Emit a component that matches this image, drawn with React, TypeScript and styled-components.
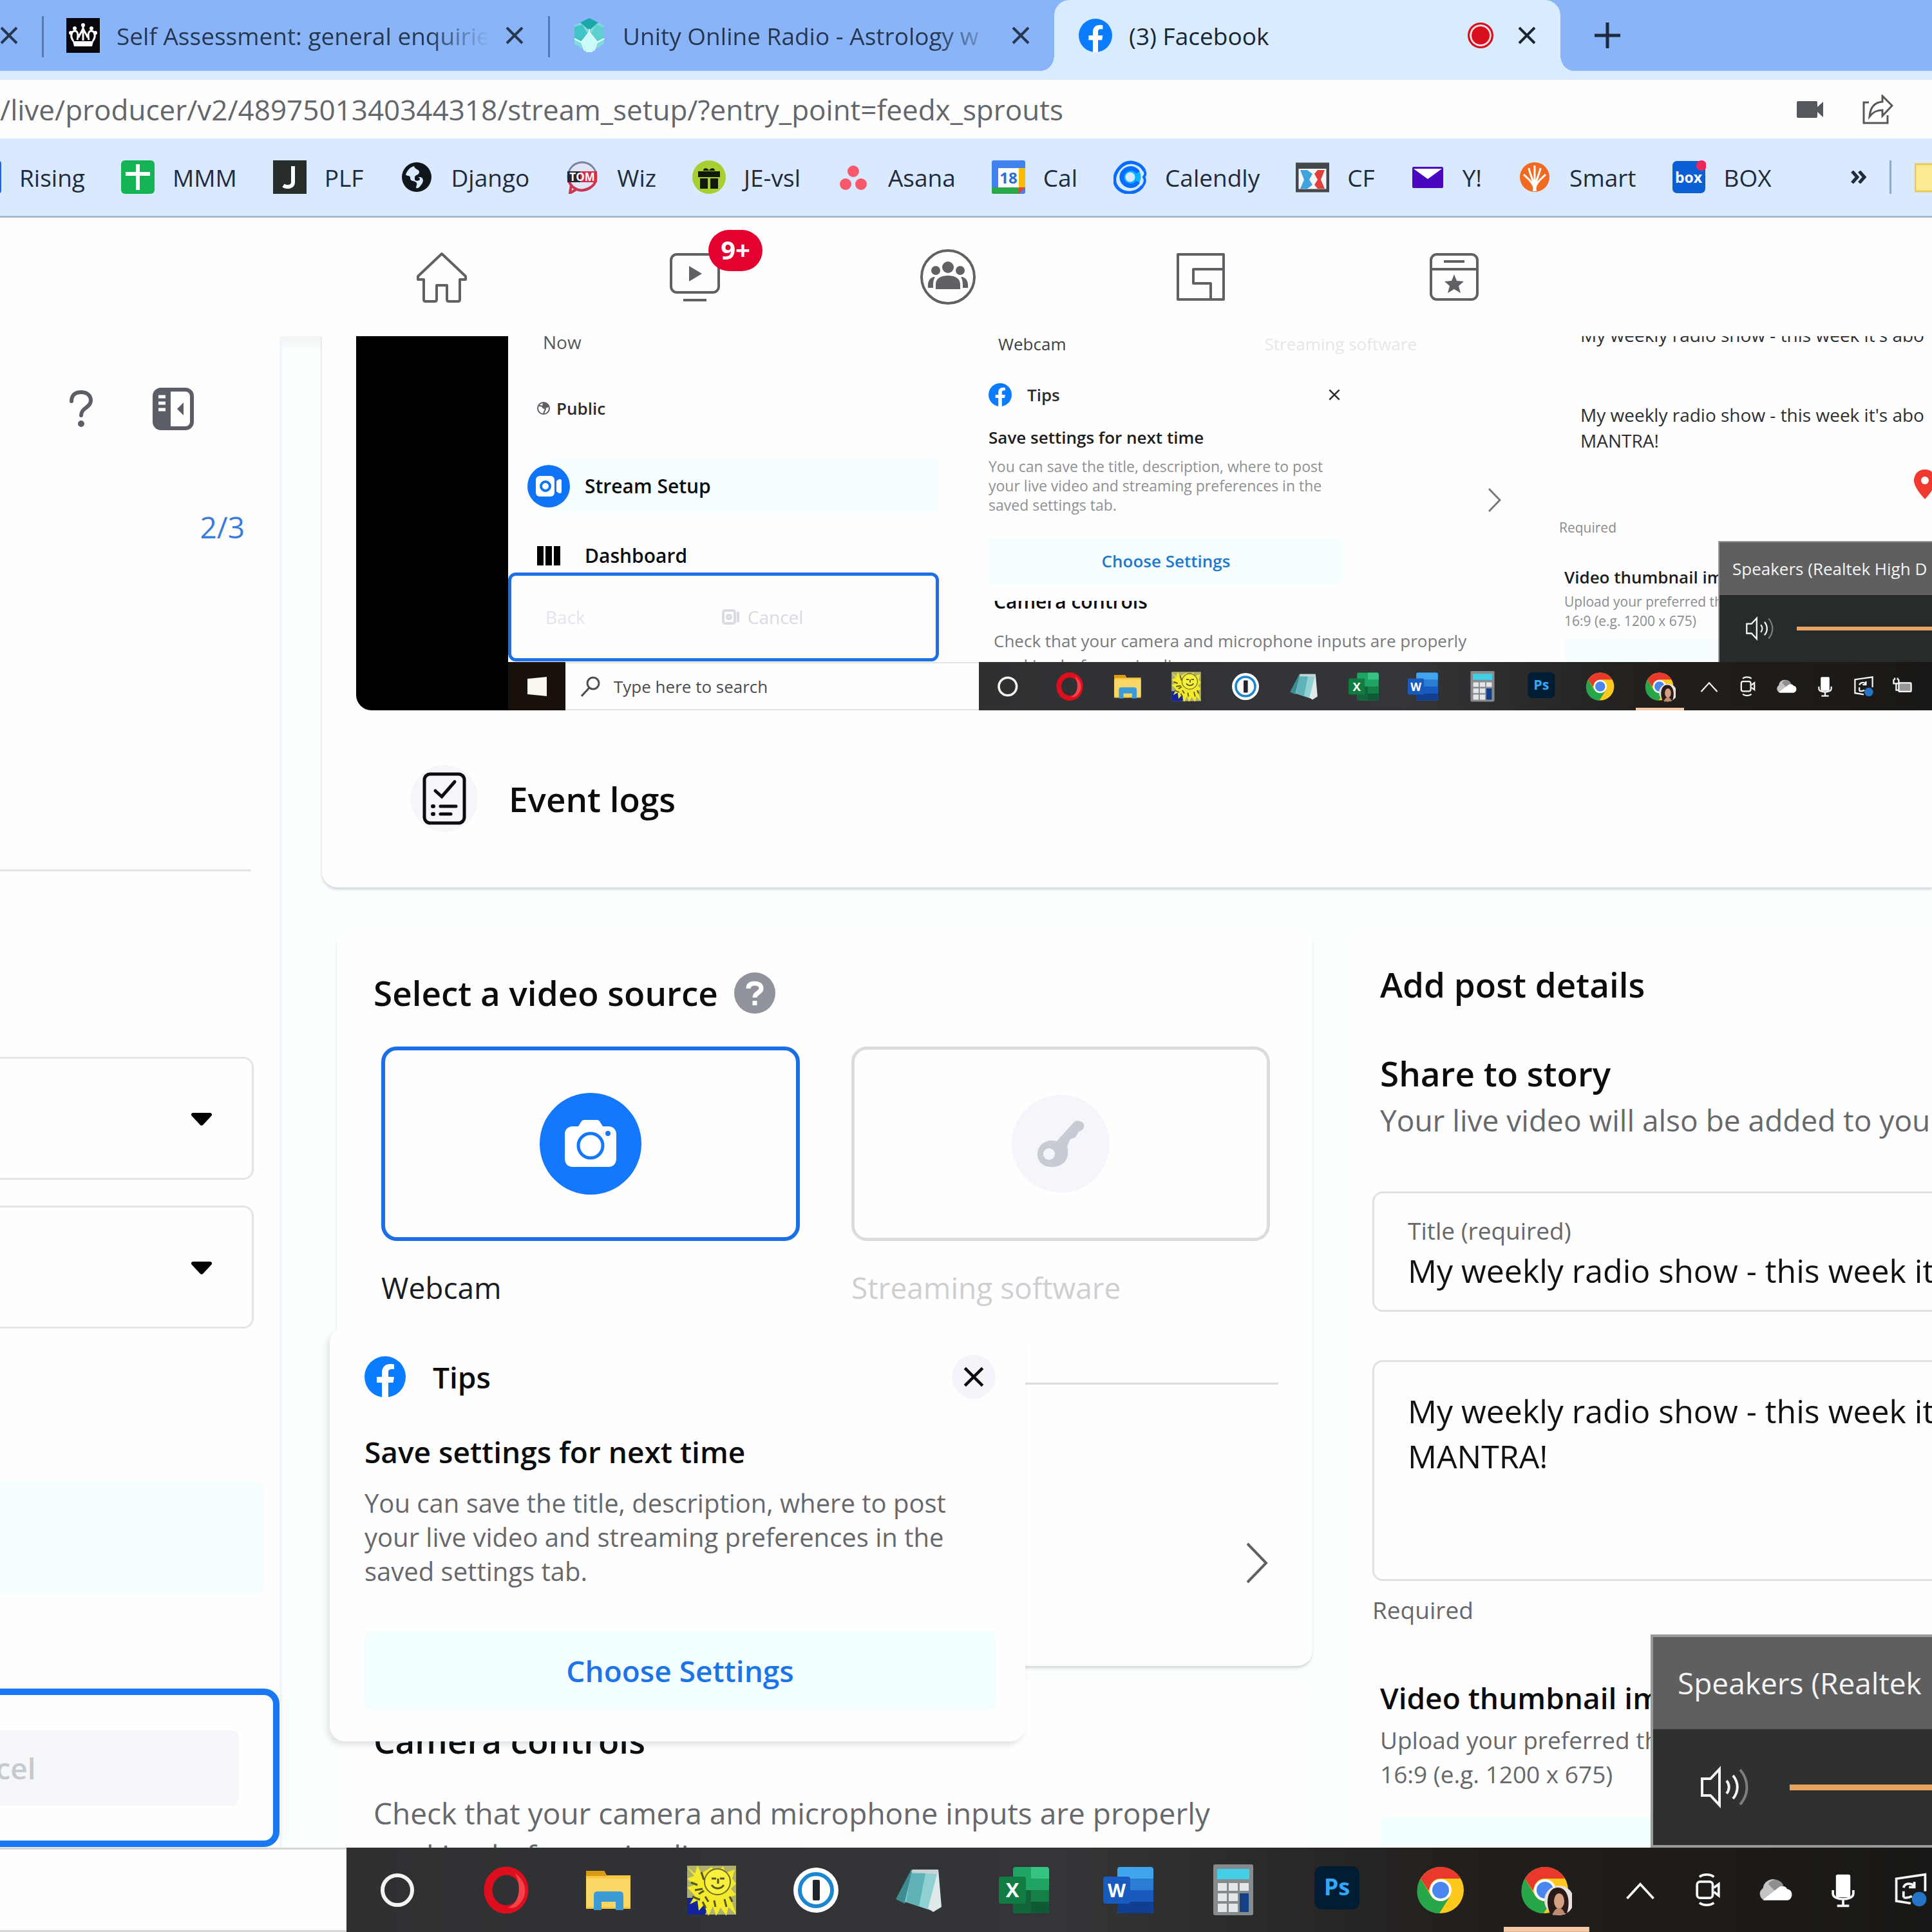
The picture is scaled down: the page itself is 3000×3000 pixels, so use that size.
import React from 'react';
import styled, { createGlobalStyle, css } from 'styled-components';

const GlobalStyle = createGlobalStyle`
  *, *::before, *::after { box-sizing: border-box; }
  html, body, #root { height: 100%; margin: 0; }
  body {
    overflow: hidden;
    background: #fefefe;
    color: #0b0c0e;
    font-family: "Open Sans", "Noto Sans", sans-serif;
  }
  button, input, select, textarea { font: inherit; color: inherit; }
  h1, h2, h3, p { margin: 0; font-weight: inherit; }
  svg { flex: none; }
`;

const blue = '#1877f2';
const grey = '#66686b';

/* ---------- shared pieces ---------- */

const IconButton = styled.button`
  display: flex;
  align-items: center;
  justify-content: center;
  flex: none;
  padding: 0;
  border: 0;
  background: none;
`;

const Screen = styled.div`
  display: flex;
  flex-direction: column;
  height: 100vh;
  overflow: hidden;
`;

type GlyphProps = { size?: number };

const CrossGlyph = ({ size = 28, stroke = 4 }: { size?: number; stroke?: number }) => (
  <svg width={size} height={size} viewBox="0 0 28 28" fill="none" stroke="currentColor" strokeWidth={stroke}>
    <path d="M2 2 26 26M26 2 2 26" />
  </svg>
);

const FacebookGlyph = ({ size = 52 }: GlyphProps) => (
  <svg width={size} height={size} viewBox="0 0 64 64">
    <circle cx="32" cy="32" r="32" fill="#0a7cff" />
    <path
      fill="#fff"
      d="M27 64V41h-8v-9h8v-6c0-9 5-14 13-14 3 0 6 .5 6 .5V20h-4c-4 0-5 2.500-5 5v7h9l-1.500 9H37v23z"
    />
  </svg>
);

/* ---------- browser tabs ---------- */

const TabStrip = styled.div`
  display: flex;
  flex: none;
  height: 110px;
  background: #8ab4f8;
  color: #27374f;
`;

const Tab = styled.div<{ $active?: boolean }>`
  position: relative;
  display: flex;
  align-items: center;
  flex: none;
  width: 786px;
  padding: 0 38px;
  gap: 26px;
  font-size: 37px;
  ${(p) =>
    p.$active
      ? css`
          background: #d9ecff;
          color: #1c2530;
          border-radius: 24px 24px 0 0;
          &::before,
          &::after {
            content: '';
            position: absolute;
            bottom: 0;
            width: 20px;
            height: 24px;
          }
          &::before {
            left: -20px;
            background: radial-gradient(ellipse 20px 24px at 0 0, transparent 98%, #d9ecff 100%);
          }
          &::after {
            right: -20px;
            background: radial-gradient(ellipse 20px 24px at 100% 0, transparent 98%, #d9ecff 100%);
          }
        `
      : css`
          &::before {
            content: '';
            position: absolute;
            left: 0;
            top: 25px;
            height: 64px;
            width: 3px;
            background: #5a78aa;
          }
        `}
`;

const TabStub = styled.div`
  display: flex;
  align-items: center;
  flex: none;
  width: 65px;
`;

const TabTitle = styled.span<{ $fade?: boolean }>`
  flex: 1;
  min-width: 0;
  overflow: hidden;
  white-space: nowrap;
  ${(p) => p.$fade && 'mask-image: linear-gradient(to right, #000 84%, transparent 100%);'}
`;

const RecordDot = styled.span`
  flex: none;
  width: 40px;
  height: 40px;
  margin-right: 12px;
  border: 3px solid #d8101c;
  border-radius: 50%;
  background: #d8101c;
  box-shadow: inset 0 0 0 3px #f6dfe8;
`;

const NewTab = styled(IconButton)`
  width: 146px;
  color: #1d2b40;
`;

/* ---------- address bar ---------- */

const AddressBar = styled.form`
  display: flex;
  flex: none;
  align-items: center;
  gap: 60px;
  height: 105px;
  border-top: 14px solid #d9ecff;
  background: #fefefe;
  color: #54575b;
`;

const UrlInput = styled.input`
  flex: 1;
  min-width: 0;
  padding: 0;
  border: 0;
  outline: 0;
  background: none;
  color: #63666a;
  font-size: 44px;
`;

const StarButton = styled(IconButton)`
  margin-right: -48px;
`;

/* ---------- bookmarks ---------- */

const Bookmarks = styled.nav`
  display: flex;
  flex: none;
  align-items: center;
  gap: 56px;
  height: 123px;
  border-bottom: 3px solid #a5b8d2;
  background: #d9eafe;
  color: #222a3c;
  font-size: 37px;
`;

const Bookmark = styled.a<{ $cut?: boolean }>`
  display: flex;
  align-items: center;
  flex: none;
  gap: 28px;
  margin-left: ${(p) => (p.$cut ? '-50px' : 0)};
  color: inherit;
  text-decoration: none;
  white-space: nowrap;
`;

const BookmarkTail = styled.div`
  display: flex;
  align-items: center;
  gap: 36px;
  margin: 0 -25px 0 auto;
`;

const TailRule = styled.span`
  width: 3px;
  height: 52px;
  background: #8fa9d4;
`;

const SvgText = styled.text`
  font-family: "Open Sans", sans-serif;
  font-weight: 700;
  text-anchor: middle;
`;

const Fav = ({ children }: { children: React.ReactNode }) => (
  <svg width="52" height="52" viewBox="0 0 52 52">
    {children}
  </svg>
);

const bookmarks: { name: string; icon: React.ReactNode }[] = [
  { name: 'Rising', icon: <rect width="52" height="52" rx="5" fill="#1a66f0" /> },
  {
    name: 'MMM',
    icon: (
      <>
        <rect width="52" height="52" rx="6" fill="#14b353" />
        <path d="M23 6h6v12h16v6H29v22h-6V24H7v-6h16z" fill="#fff" />
      </>
    ),
  },
  {
    name: 'PLF',
    icon: (
      <>
        <rect width="52" height="52" fill="#272d2a" />
        <path d="M31 9v25c0 7-9 9-15 5" fill="none" stroke="#fff" strokeWidth="6" />
      </>
    ),
  },
  {
    name: 'Django',
    icon: (
      <>
        <circle cx="27" cy="26" r="23" fill="#11161c" />
        <path d="M10 23c1-6 7-13 13-14 1 5 8 5 8 9 0 5-6 4-7 8l9 0c5 1 5 8 1 12-2 2-3 6-8 5 0-4 3-6 0-9-4-3-9-1-9-7 0-3-3-3-7-4z" fill="#d9eafe" />
        <path d="M24 26c3-1 8 0 8 3s-6 4-8 1z" fill="#11161c" />
      </>
    ),
  },
  {
    name: 'Wiz',
    icon: (
      <>
        <circle cx="26" cy="25" r="22" fill="#dfe6f6" stroke="#7b83a3" strokeWidth="3" />
        <path d="M5 32c4 10 14 16 24 14s16-8 18-14M9 38l-2 13 10-6" fill="none" stroke="#cf3450" strokeWidth="4" />
        <rect x="3" y="17" width="20" height="17" fill="#222736" />
        <rect x="23" y="17" width="26" height="17" fill="#d92a46" />
        <SvgText x="26" y="32" fontSize="17" fill="#fff">TOM</SvgText>
      </>
    ),
  },
  {
    name: 'JE-vsl',
    icon: (
      <>
        <circle cx="26" cy="26" r="26" fill="#a6cf2f" />
        <path d="M9 17h34v9H9zM12 28h12v16H12zM28 28h12v16H28zM17 16c0-5 7-5 9 0 2-5 9-5 9 0z" fill="#12180a" />
      </>
    ),
  },
  {
    name: 'Asana',
    icon: (
      <g fill="#f9576b">
        <circle cx="26" cy="17" r="9" />
        <circle cx="14" cy="37" r="9" />
        <circle cx="38" cy="37" r="9" />
      </g>
    ),
  },
  {
    name: 'Cal',
    icon: (
      <>
        <rect width="52" height="52" rx="3" fill="#3f82f0" />
        <path d="M42 12h10v30H42z" fill="#fbbc05" />
        <path d="M0 42h42v10H3c-2 0-3-1-3-3z" fill="#2ba84a" />
        <path d="M42 42h10L42 52z" fill="#e5432f" />
        <rect x="10" y="12" width="32" height="30" fill="#fff" />
        <SvgText x="26" y="36" fontSize="24" fill="#2b6fd6">18</SvgText>
      </>
    ),
  },
  {
    name: 'Calendly',
    icon: (
      <g fill="none">
        <path d="M48 16c-7-13-25-18-37-6s-12 27-2 35 27 7 36-5" stroke="#0a6cff" strokeWidth="5" />
        <path d="M48 16c2 4 2 6-1 10 3 4 3 8-2 14" stroke="#0a6cff" strokeWidth="4" />
        <circle cx="26" cy="26" r="12" stroke="#0ab4ff" strokeWidth="9" />
        <path d="M38 33c-7 12-25 6-25-7s18-19 25-7" stroke="#0a6cff" strokeWidth="7" />
      </g>
    ),
  },
  {
    name: 'CF',
    icon: (
      <>
        <rect x="2" y="6" width="48" height="41" fill="#f3f7fb" stroke="#44484d" strokeWidth="5" />
        <path d="M2 6h48v7H2z" fill="#44484d" />
        <path d="M7 15h11l8 6-5 9 5 8-8 6H7l6-14z" fill="#3fa3dc" />
        <path d="M45 15H34l-5 6 5 9-5 8 5 6h11l-6-14z" fill="#e2403c" />
      </>
    ),
  },
  {
    name: 'Y!',
    icon: (
      <>
        <rect x="2" y="10" width="48" height="33" rx="2" fill="#4b07c0" />
        <path d="M4 13h44L26 29z" fill="#fff" />
      </>
    ),
  },
  {
    name: 'Smart',
    icon: (
      <>
        <circle cx="26" cy="26" r="23" fill="#f26a21" />
        <g stroke="#fff" strokeWidth="3" fill="none">
          <path d="M26 46V8M25 40C24 30 18 20 17 12M27 40c1-10 7-20 8-28M25 42C22 32 14 27 9 22M27 42c3-10 11-15 16-20" />
        </g>
        <path d="M23 48 25 28h2l2 20z" fill="#fff" />
      </>
    ),
  },
  {
    name: 'BOX',
    icon: (
      <>
        <rect y="1" width="51" height="50" rx="7" fill="#0a5fd4" />
        <SvgText x="25" y="35" fontSize="23" fill="#fff">box</SvgText>
        <circle cx="45" cy="8" r="8" fill="#f0255c" />
      </>
    ),
  },
];

/* ---------- site header ---------- */

const SiteNav = styled.nav`
  display: flex;
  flex: none;
  height: 184px;
  padding-left: 489px;
  background: #fefefe;
  color: #5f6164;
`;

const NavItem = styled.a`
  position: relative;
  display: flex;
  align-items: center;
  justify-content: center;
  flex: none;
  width: 393px;
  color: inherit;
`;

const Badge = styled.span`
  position: absolute;
  top: 19px;
  left: 218px;
  width: 84px;
  height: 64px;
  border-radius: 32px;
  background: #e4002f;
  color: #fff;
  font-size: 40px;
  font-weight: 700;
  line-height: 62px;
  text-align: center;
`;

const navIcons: React.ReactNode[] = [
  <path key="home" d="M46 10 9 45v5h9v31c0 2 1 3 3 3h14c2 0 3-1 3-3V59h16v22c0 2 1 3 3 3h14c2 0 3-1 3-3V50h9v-5z" />,
  <g key="watch">
    <rect x="9" y="11" width="74" height="59" rx="9" />
    <path d="M28 82h36" />
    <path d="M37 29v24l20-12z" fill="currentColor" stroke="none" />
  </g>,
  <g key="groups">
    <circle cx="46" cy="46" r="41" />
    <g fill="currentColor" stroke="none">
      <circle cx="46" cy="31" r="9" />
      <circle cx="27" cy="36" r="7" />
      <circle cx="65" cy="36" r="7" />
      <path d="M27 65V58c0-10 8-14 19-14s19 4 19 14v7zM23 63H15c-1-9 2-17 11-17-3 5-3 9-3 17zM69 63h8c1-9-2-17-11-17 3 5 3 9 3 17z" />
    </g>
  </g>,
  <g key="gaming">
    <path d="M10 11h71v70H10z" />
    <path d="M81 34H34v22h27v25" />
  </g>,
  <g key="feeds">
    <rect x="10" y="11" width="72" height="70" rx="9" />
    <path d="M10 34h72M30 22h32" />
    <path d="m46 42 4 10 11 1-8 7 3 11-10-6-10 6 3-11-8-7 11-1z" fill="currentColor" stroke="none" />
  </g>,
];

/* ---------- page body ---------- */

const Body = styled.div`
  position: relative;
  display: flex;
  flex: 1;
  min-height: 0;
`;

const Sidebar = styled.aside`
  display: flex;
  flex-direction: column;
  flex: none;
  width: 434px;
  overflow: hidden;
  background: #fefefe;
`;

const SidebarTools = styled.div`
  display: flex;
  justify-content: flex-end;
  gap: 92px;
  padding: 80px 133px 0 0;
  color: #5b5e66;
`;

const StepCount = styled.p`
  margin-top: 120px;
  padding-right: 54px;
  color: #3a7bdc;
  font-size: 46px;
  line-height: 60px;
  text-align: right;
`;

const SidebarRule = styled.hr`
  width: 390px;
  height: 3px;
  margin: 502px 0 288px;
  border: 0;
  background: #e3e5e8;
`;

const SelectBox = styled.label`
  position: relative;
  display: block;
  flex: none;
  width: 414px;
  height: 191px;
  margin: 0 0 40px -20px;
  border: 3px solid #e2e4e6;
  border-radius: 16px;
  svg {
    position: absolute;
    right: 62px;
    top: 84px;
    pointer-events: none;
  }
`;

const Select = styled.select`
  width: 100%;
  height: 100%;
  border: 0;
  outline: 0;
  appearance: none;
  background: none;
`;

const ActiveStep = styled.div`
  flex: none;
  width: 410px;
  height: 172px;
  margin: 199px 0 148px;
  border-radius: 0 16px 16px 0;
  background: #f4feff;
`;

const SidebarFooter = styled.div`
  display: flex;
  flex: none;
  align-items: center;
  justify-content: flex-end;
  height: 246px;
  margin-left: -480px;
  padding-right: 53px;
  border: 10px solid ${blue};
  border-radius: 24px;
`;

const CancelButton = styled.button`
  width: 778px;
  height: 117px;
  border: 0;
  border-radius: 12px;
  background: #f5f7fa;
  color: #c6c9cd;
  font-size: 46px;
  font-weight: 600;
`;

const Main = styled.main`
  flex: 1;
  min-width: 0;
  overflow: hidden;
  padding-left: 62px;
  border-left: 4px solid #f2f5f8;
  background: linear-gradient(#f1f3f4, #fbfefe 24px);
`;

const PreviewCard = styled.section`
  border-radius: 0 0 0 24px;
  background: #fefefe;
  box-shadow: 0 3px 4px #cfd3d6;
`;

const EventLogs = styled.button`
  display: flex;
  align-items: center;
  gap: 48px;
  padding: 85px 0 86px 138px;
  border: 0;
  background: none;
  font-size: 53px;
  font-weight: 600;
`;

const RoundIcon = styled.span<{ $size: number; $tone: string }>`
  display: flex;
  align-items: center;
  justify-content: center;
  flex: none;
  width: ${(p) => p.$size}px;
  height: ${(p) => p.$size}px;
  border-radius: 50%;
  background: ${(p) => p.$tone};
`;

const Columns = styled.div`
  display: flex;
  align-items: flex-start;
  gap: 52px;
  margin: 64px -24px 0 23px;
`;

const LeftColumn = styled.div`
  position: relative;
  flex: none;
  width: 1515px;
`;

const Card = styled.section`
  border-radius: 24px;
  background: #fefefe;
`;

const SourceCard = styled(Card)`
  display: flex;
  flex-direction: column;
  height: 1145px;
  padding: 64px 53px 0 57px;
  box-shadow: 0 4px 4px -1px #cfd3d6;
`;

const Heading = styled.h2`
  display: flex;
  align-items: center;
  gap: 25px;
  font-size: 53px;
  font-weight: 600;
  line-height: 72px;
`;

const SourceOptions = styled.div`
  display: flex;
  gap: 80px;
  margin: 47px 0 0 12px;
`;

const SourceOption = styled.label<{ $muted?: boolean }>`
  display: block;
  width: 650px;
  color: ${(p) => (p.$muted ? '#cdcfd2' : '#1b1c1f')};
  font-size: 46px;
  line-height: 60px;
  input {
    position: absolute;
    opacity: 0;
  }
`;

const SourceTile = styled.span<{ $muted?: boolean }>`
  display: flex;
  align-items: center;
  justify-content: center;
  height: 302px;
  margin-bottom: 42px;
  border: ${(p) => (p.$muted ? '5px solid #dadcde' : '6px solid #1a6fe6')};
  border-radius: 24px;
`;

const CardRule = styled.hr`
  width: 100%;
  height: 3px;
  margin: 118px 0 0;
  border: 0;
  background: #d9dbde;
`;

const DeviceRow = styled.div`
  display: flex;
  flex: 1;
  align-items: center;
  justify-content: flex-end;
  padding: 116px 16px 0 0;
`;

const CameraCard = styled(Card)`
  margin-top: 23px;
  padding: 57px 53px 0 57px;
`;

const CameraText = styled.p`
  margin-top: 43px;
  color: ${grey};
  font-size: 46px;
  line-height: 66px;
  white-space: nowrap;
`;

/* ---------- tips popup ---------- */

const TipsPopup = styled.section`
  position: absolute;
  top: 620px;
  left: -11px;
  width: 1080px;
  padding: 42px 46px 49px 54px;
  border-radius: 24px;
  background: #fefefe;
  box-shadow: -4px 6px 8px rgba(60, 70, 80, 0.14);
`;

const TipsHead = styled.div`
  display: flex;
  align-items: center;
  gap: 42px;
  height: 68px;
  font-size: 46px;
  font-weight: 600;
`;

const TipsClose = styled(IconButton)`
  width: 68px;
  height: 68px;
  margin-left: auto;
  border-radius: 50%;
  background: #f3f5fa;
`;

const TipsTitle = styled.h3`
  margin-top: 52px;
  font-size: 46px;
  font-weight: 600;
  line-height: 60px;
`;

const TipsText = styled.p`
  margin: 23px 0 66px;
  color: ${grey};
  font-size: 40px;
  line-height: 53px;
  white-space: nowrap;
`;

const TipsAction = styled.button`
  display: block;
  width: 100%;
  height: 123px;
  border: 0;
  border-radius: 12px;
  background: #f3feff;
  color: #1b74e8;
  font-size: 46px;
  font-weight: 600;
`;

/* ---------- post details ---------- */

const DetailsCard = styled(Card)`
  flex: 1;
  min-width: 0;
  padding: 51px 0 0 41px;
`;

const Inset = styled.div`
  padding-left: 12px;
`;

const ShareHeading = styled(Heading)`
  margin-top: 66px;
`;

const ShareText = styled.p`
  margin: 6px 0 81px;
  color: ${grey};
  font-size: 46px;
  line-height: 60px;
  white-space: nowrap;
`;

const Field = styled.label`
  display: block;
  height: 187px;
  margin-bottom: 75px;
  padding: 33px 0 0 52px;
  border: 3px solid #dfe1e4;
  border-radius: 16px;
  color: ${grey};
  font-size: 37px;
  line-height: 50px;
`;

const TitleInput = styled.input`
  display: block;
  width: 100%;
  height: 66px;
  margin-top: 4px;
  padding: 0;
  border: 0;
  outline: 0;
  background: none;
  color: #101113;
  font-size: 50px;
`;

const Description = styled.textarea`
  display: block;
  width: 100%;
  height: 343px;
  padding: 41px 0 0 52px;
  overflow: hidden;
  border: 3px solid #dfe1e4;
  border-radius: 16px;
  outline: 0;
  resize: none;
  background: none;
  color: #101113;
  font-size: 50px;
  line-height: 70px;
  white-space: pre;
`;

const Required = styled.p`
  margin: 20px 0 81px;
  color: ${grey};
  font-size: 37px;
  line-height: 50px;
`;

const ThumbTitle = styled.h3`
  font-size: 46px;
  font-weight: 600;
  line-height: 60px;
  white-space: nowrap;
`;

const ThumbText = styled.p`
  margin: 9px 0 40px;
  color: ${grey};
  font-size: 37px;
  line-height: 53px;
  white-space: nowrap;
`;

const UploadButton = styled.button`
  display: block;
  width: 100%;
  height: 124px;
  border: 0;
  border-radius: 12px;
  background: #f3feff;
`;

/* ---------- volume flyout ---------- */

const VolumeFlyout = styled.section`
  position: absolute;
  right: 0;
  bottom: 0;
  display: flex;
  flex-direction: column;
  width: 437px;
  height: 331px;
  overflow: hidden;
  border: solid #9a9a9a;
  border-width: 4px 0 4px 4px;
  background: #2f3131;
  color: #f4f4f4;
`;

const VolumeDevice = styled.h3`
  padding-left: 38px;
  background: #5f5f5f;
  font-size: 46px;
  line-height: 143px;
  white-space: nowrap;
`;

const VolumeRow = styled.div`
  display: flex;
  flex: 1;
  align-items: center;
  gap: 60px;
  padding-left: 72px;
`;

const VolumeSlider = styled.input<{ $thick: number }>`
  flex: none;
  width: 560px;
  height: ${(p) => p.$thick}px;
  margin: 0;
  appearance: none;
  background: #e8a45e;
  &::-webkit-slider-thumb {
    appearance: none;
    width: 16px;
    height: 50px;
    background: #e8a45e;
  }
`;

const SpeakerGlyph = ({ size = 80 }: GlyphProps) => (
  <svg width={size} height={size} viewBox="0 0 80 80" fill="none" stroke="currentColor" strokeWidth="4">
    <path d="M4 27h13L31 12v56L17 53H4z" />
    <path d="M42 30c5 6 5 14 0 20M52 22c9 11 9 25 0 36" />
    <path d="M63 13c14 16 14 38 0 54" opacity=".4" />
  </svg>
);

/* ---------- taskbar ---------- */

const Taskbar = styled.footer`
  display: flex;
  flex: none;
  height: 131px;
  overflow: hidden;
`;

const SearchArea = styled.div`
  flex: none;
  width: 538px;
  border: solid #d4d6d8;
  border-width: 3px 0;
  background: #fefefe;
`;

const AppStrip = styled.div`
  display: flex;
  flex: 1;
  min-width: 0;
  background: linear-gradient(90deg, #2f3032, #343538 45%, #211e1b 72%, #1a1816);
  color: #f6f6f6;
`;

const AppSlot = styled(IconButton)<{ $width: number; $open?: boolean }>`
  width: ${(p) => p.$width}px;
  color: inherit;
  ${(p) =>
    p.$open &&
    css`
      background: linear-gradient(#f5c9a4, #f5c9a4) bottom / 82% 6% no-repeat;
    `}
`;

const Tray = styled.div<{ $gap: number }>`
  display: flex;
  flex: none;
  padding-left: ${(p) => p.$gap}px;
`;

const appIcons: React.ReactNode[] = [
  <circle key="cortana" cx="38" cy="40" r="23" fill="none" stroke="#f4f4f4" strokeWidth="6" />,
  <g key="opera">
    <ellipse cx="45" cy="40" rx="28" ry="30" fill="none" stroke="#dd0f1e" strokeWidth="13" />
    <path d="M64 18c14 14 14 32 0 45-4 4-10 6-16 4 18-6 22-34 10-54z" fill="#f8424a" />
  </g>,
  <g key="explorer">
    <path d="M7 10h28l4 7h37v52H7z" fill="#f9c944" />
    <path d="M7 10h28l4 8H7z" fill="#d99a14" />
    <path d="M7 22h69v44H7z" fill="#fbd768" />
    <path d="M19 71V48c0-4 2-6 6-6h34c4 0 6 2 6 6v23H53V58H31v13z" fill="#3c9ad6" />
  </g>,
  <g key="sun">
    <path d="M2 2h76v76H2z" fill="#aeb06c" />
    <path d="M2 52h36l-8 26H2z" fill="#12239b" />
    <path d="M2 4l12 10 4-12 6 12L40 4l6 10L58 3l4 10 14-5-4 14 6 8-8 8 8 9-9 4 9 27-12-12-3 14-9-13-7 13-5-15-7 15-7-17-8 9-2-16-12 6 8-14L2 36l11-4L2 22l11-4z" fill="#f3ea2b" />
    <circle cx="49" cy="27" r="20" fill="#f7f03c" stroke="#6c6a2c" strokeWidth="2" />
    <path d="M40 22h7M53 22h7M40 32c5 7 14 7 19 0M50 22v8M10 50l12 5M26 58l5 10M44 56l2 10M60 54l3 12M8 28l10 4M24 12l4 12M14 40l12-2M20 46l8-5M30 50l5 8M68 50l4 8" fill="none" stroke="#55551f" strokeWidth="3" />
  </g>,
  <g key="onepassword">
    <circle cx="40" cy="40" r="35" fill="#fff" />
    <circle cx="40" cy="40" r="25" fill="none" stroke="#1d86d0" strokeWidth="6" />
    <rect x="35" y="24" width="11" height="32" rx="2" fill="#20262c" />
  </g>,
  <g key="notepad">
    <path d="M26 8 2 54l14 7L38 12z" fill="#3d8c92" />
    <path d="M28 8h40L58 72 16 58z" fill="#8fd0d3" />
    <path d="M28 8h40l-2 7-40-3z" fill="#c9d3d5" />
    <path d="M68 8 73 66l-13 8-8-6z" fill="#dfe9ea" />
    <path d="M26 14 18 58l20 7L48 14z" fill="#5fb2b5" />
  </g>,
  <g key="excel">
    <rect x="22" y="4" width="56" height="72" rx="4" fill="#1fa463" />
    <path d="M50 4h24c2 0 4 2 4 4v14H50z" fill="#35c481" />
    <path d="M22 40h28v36H26c-2 0-4-2-4-4z" fill="#12653a" />
    <path d="M50 40h28v18H50z" fill="#148046" />
    <path d="M50 58h28v14c0 2-2 4-4 4H50z" fill="#0f5a34" />
    <rect x="0" y="19" width="42" height="42" rx="4" fill="#107c41" />
    <SvgText x="21" y="51" fontSize="31" fill="#fff">X</SvgText>
  </g>,
  <g key="word">
    <rect x="22" y="4" width="56" height="72" rx="4" fill="#2b7cd3" />
    <path d="M26 4h48c2 0 4 2 4 4v14H22V8c0-2 2-4 4-4z" fill="#41a5ee" />
    <path d="M22 40h56v18H22z" fill="#185abd" />
    <path d="M22 58h56v14c0 2-2 4-4 4H26c-2 0-4-2-4-4z" fill="#103f91" />
    <rect x="0" y="19" width="42" height="42" rx="4" fill="#185abd" />
    <SvgText x="21" y="51" fontSize="29" fill="#fff">W</SvgText>
  </g>,
  <g key="calculator">
    <rect x="9" y="0" width="62" height="79" rx="3" fill="#868b90" />
    <rect x="15" y="7" width="50" height="16" fill="#43cfe6" />
    <g fill="#e4e6e8">
      <path d="M16 29h14v12H16zM33 29h14v12H33zM50 29h14v12H50zM16 45h14v12H16zM33 45h14v12H33zM16 61h14v13H16zM33 61h14v13H33z" />
    </g>
    <path d="M50 45h14v29H50z" fill="#153f86" />
  </g>,
  <g key="photoshop">
    <rect x="4" y="3" width="70" height="67" rx="12" fill="#001d34" />
    <SvgText x="39" y="48" fontSize="36" fill="#31a8ff">Ps</SvgText>
  </g>,
];

const ChromeMark = () => (
  <g>
    <circle cx="38" cy="40" r="36" fill="#fcc91c" />
    <path d="M7 22 23 49c5 8 13 9 19 8L33 76C4 72-6 44 7 22z" fill="#27a74a" />
    <path d="M23 49c5 9 21 12 30 0L36 76h-6z" fill="#27a74a" />
    <path d="M7 22C14 11 25 4 38 4s25 7 31 18H38c-9 0-15 6-17 14L19 41z" fill="#e8392c" />
    <circle cx="38" cy="40" r="17" fill="#fff" />
    <circle cx="38" cy="40" r="13" fill="#4a86ee" />
  </g>
);

appIcons.push(
  <ChromeMark key="chrome" />,
  <g key="chrome-profile">
    <ChromeMark />
    <circle cx="60" cy="56" r="23" fill="#e8e2de" />
    <path d="M46 76c-8-16-4-40 12-40s20 22 14 40z" fill="#2a1a18" />
    <ellipse cx="60" cy="57" rx="8" ry="12" fill="#d3a083" />
    <path d="M50 79c1-8 6-11 10-11s8 4 9 10z" fill="#c08a70" />
  </g>,
);

const trayIcons: React.ReactNode[] = [
  <path key="more" d="m8 44 22-24 22 24" />,
  <g key="meet">
    <rect x="12" y="16" width="26" height="27" rx="5" />
    <path d="m40 26 8-6v19l-8-6M16 8c6-5 18-5 24 0M16 51c6 5 18 5 24 0" />
  </g>,
  <g key="cloud" stroke="none">
    <path d="M13 47a11 11 0 0 1-4-20 17 17 0 0 1 32-6z" fill="#c4c4c4" />
    <path d="M18 20c5-10 20-10 25 2l-14 9z" fill="#8f8f8f" />
    <path d="M9 46 36 25c6-4 13 0 13 3 12 1 10 19 0 19H14c-2 0-4 0-5-1z" fill="#fff" />
  </g>,
  <g key="mic">
    <rect x="18" y="4" width="24" height="38" rx="3" fill="#fff" stroke="none" />
    <path d="M13 30v6c0 12 34 12 34 0v-6M30 46v9M20 56h20" />
  </g>,
  <g key="sync">
    <path d="M30 52 6 48V11l48-7v28" />
    <path d="M18 26c2-8 12-8 17-4M36 16v9h-9M18 42c6 2 10 0 14-2M18 32v10" />
    <circle cx="44" cy="45" r="12" fill="#2474c8" stroke="none" />
  </g>,
  <g key="power">
    <rect x="20" y="20" width="34" height="24" rx="2" fill="#fff" fillOpacity=".55" />
    <path d="M6 10v12h14V10M13 22v18h8M9 6v6M17 6v6" />
  </g>,
];

type AppRowProps = { slot: number; icon: number; tray: number; trayIcon: number; trayGap: number; count: number };

const AppRow = ({ slot, icon, tray, trayIcon, trayGap, count }: AppRowProps) => (
  <>
    {appIcons.map((art, i) => (
      <AppSlot key={i} $width={slot} $open={i === appIcons.length - 1}>
        <svg width={icon} height={icon} viewBox="0 0 80 80">{art}</svg>
      </AppSlot>
    ))}
    <Tray $gap={trayGap}>
      {trayIcons.slice(0, count).map((art, i) => (
        <AppSlot key={i} $width={tray}>
          <svg width={trayIcon} height={trayIcon} viewBox="0 0 60 60" fill="none" stroke="currentColor" strokeWidth="4">
            {art}
          </svg>
        </AppSlot>
      ))}
    </Tray>
  </>
);

/* ---------- shared-screen preview ---------- */

const Preview = styled.div`
  display: flex;
  height: 581px;
  margin-left: 53px;
  overflow: hidden;
  border-radius: 0 0 0 24px;
  background: #fefefe;
`;

const Letterbox = styled.div`
  flex: none;
  width: 236px;
  background: #000;
`;

const MiniScreen = styled.div`
  position: relative;
  display: flex;
  flex: 1;
  flex-direction: column;
  min-width: 0;
  font-size: 26px;
  line-height: 34px;
  white-space: nowrap;
`;

const MiniBody = styled.div`
  display: flex;
  flex: 1;
  min-height: 0;
  overflow: hidden;
`;

const MiniSidebar = styled.div`
  flex: none;
  width: 669px;
  margin: -8px 77px 0 0;
`;

const MiniNow = styled.p`
  padding-left: 54px;
  color: #55585c;
  font-size: 28px;
`;

const MiniPublic = styled.p`
  display: flex;
  align-items: center;
  gap: 9px;
  margin: 69px 0 61px;
  padding-left: 44px;
  color: #2a2c30;
  font-weight: 600;
`;

const MiniStep = styled.div<{ $active?: boolean }>`
  display: flex;
  align-items: center;
  gap: 23px;
  padding-left: 30px;
  font-size: 30px;
  font-weight: 600;
  ${(p) => (p.$active ? 'height: 86px; margin-bottom: 48px; background: linear-gradient(90deg, transparent 4%, #f7feff 12%);' : '')}
`;

const MiniStepIcon = styled.span`
  display: flex;
  justify-content: center;
  width: 66px;
`;

const MiniFooter = styled.div`
  display: flex;
  align-items: center;
  height: 138px;
  margin-top: 9px;
  padding-left: 53px;
  border: 5px solid #1a70e4;
  border-radius: 12px;
  color: #e3e5ee;
  font-size: 28px;
`;

const MiniCancel = styled.span`
  display: flex;
  align-items: center;
  gap: 12px;
  margin-left: 212px;
  color: #d8dae4;
`;

const MiniCenter = styled.div`
  flex: none;
  width: 775px;
  margin-top: -5px;
`;

const MiniLabels = styled.div`
  display: flex;
  gap: 308px;
  padding-left: 15px;
  color: #3c3f43;
`;

const MiniMuted = styled.span`
  color: #e6e7e9;
`;

const MiniTipsHead = styled.div`
  display: flex;
  align-items: center;
  gap: 24px;
  width: 546px;
  height: 36px;
  margin: 44px 0 31px;
  font-weight: 600;
  color: #2a2c30;
`;

const MiniClose = styled(IconButton)`
  margin-left: auto;
`;

const MiniStrong = styled.p`
  font-weight: 600;
  color: #1c1d20;
`;

const MiniTipsText = styled.p`
  margin: 13px 0 36px;
  color: #8e9093;
  font-size: 23px;
  line-height: 30px;
`;

const MiniAction = styled.button`
  display: block;
  width: 551px;
  height: 72px;
  padding: 0;
  border: 0;
  background: #f6feff;
  color: #1f78cc;
  font-weight: 600;
`;

const MiniCut = styled.div`
  display: flex;
  align-items: flex-end;
  height: 19px;
  margin: 26px 0 24px;
  padding-left: 8px;
  overflow: hidden;
  font-size: 30px;
  font-weight: 600;
  line-height: 36px;
`;

const MiniCheck = styled.p`
  padding-left: 8px;
  color: #77797c;
  line-height: 38px;
`;

const MiniNext = styled.div`
  flex: none;
  width: 111px;
  padding-top: 236px;
`;

const MiniDetails = styled.div`
  flex: 1;
  min-width: 0;
  margin-top: -22px;
  color: #2c2e32;
`;

const MiniPost = styled.p`
  margin-bottom: 84px;
  padding-left: 33px;
  font-size: 28px;
  line-height: 40px;
`;

const MiniPin = styled.div`
  display: flex;
  height: 76px;
  margin-top: -60px;
  padding-left: 550px;
`;

const MiniSmall = styled.p`
  color: #8a8c8f;
  font-size: 21px;
  line-height: 30px;
`;

const MiniThumb = styled.div`
  display: grid;
  gap: 6px;
  padding: 45px 0 0 8px;
`;

const MiniUpload = styled.div`
  height: 60px;
  margin-top: 6px;
  background: #f6feff;
`;

const MiniVolume = styled(VolumeFlyout)`
  bottom: 75px;
  width: 332px;
  height: 188px;
  border-width: 2px 0 0 2px;
  background: #282b2c;
`;

const MiniDevice = styled(VolumeDevice)`
  padding-left: 20px;
  font-size: 26px;
  line-height: 82px;
`;

const MiniVolumeRow = styled(VolumeRow)`
  gap: 34px;
  padding-left: 40px;
`;

const MiniTaskbar = styled.div`
  display: flex;
  flex: none;
  height: 75px;
  overflow: hidden;
`;

const MiniStart = styled.div`
  display: flex;
  align-items: center;
  justify-content: center;
  width: 89px;
  background: #17100b;
`;

const MiniSearch = styled.div`
  display: flex;
  align-items: center;
  gap: 21px;
  width: 642px;
  padding-left: 24px;
  border: solid #e1e3e5;
  border-width: 2px 0;
  color: #4a4d50;
`;

const SharedScreen = () => (
  <Preview>
    <Letterbox />
    <MiniScreen>
      <MiniBody>
        <MiniSidebar>
          <MiniNow>Now</MiniNow>
          <MiniPublic>
            <svg width="22" height="22" viewBox="0 0 22 22" fill="none" stroke="#5c5f63" strokeWidth="2">
              <circle cx="11" cy="11" r="9" />
              <path d="M4 7c4 0 6 1 6 3l4 2-3 7" />
              <path d="M11 3l-1 5 4 2 5-2C18 5 14 3 11 3z" fill="#5c5f63" />
            </svg>
            Public
          </MiniPublic>
          <MiniStep $active>
            <RoundIcon $size={66} $tone="#0f74f6">
              <svg width="42" height="36" viewBox="0 0 42 36">
                <rect x="1" y="2" width="29" height="32" rx="6" fill="#fff" />
                <path d="M33 10c4-4 8-4 8 0v16c0 4-4 4-8 0z" fill="#fff" />
                <circle cx="16" cy="18" r="7" fill="none" stroke="#0f74f6" strokeWidth="4" />
              </svg>
            </RoundIcon>
            Stream Setup
          </MiniStep>
          <MiniStep>
            <MiniStepIcon>
              <svg width="36" height="30" viewBox="0 0 36 30">
                <path d="M0 0h10v30H0zM13 0h10v30H13zM26 0h10v30H26z" />
              </svg>
            </MiniStepIcon>
            Dashboard
          </MiniStep>
          <MiniFooter>
            Back
            <MiniCancel>
              <svg width="28" height="24" viewBox="0 0 28 24" fill="none" stroke="currentColor" strokeWidth="4">
                <rect x="2" y="2" width="18" height="20" rx="3" />
                <path d="M25 4v16" />
                <circle cx="11" cy="12" r="3" />
              </svg>
              Cancel
            </MiniCancel>
          </MiniFooter>
        </MiniSidebar>
        <MiniCenter>
          <MiniLabels>
            <span>Webcam</span>
            <MiniMuted>Streaming software</MiniMuted>
          </MiniLabels>
          <MiniTipsHead>
            <FacebookGlyph size={36} />
            Tips
            <MiniClose>
              <CrossGlyph size={18} stroke={4} />
            </MiniClose>
          </MiniTipsHead>
          <MiniStrong>Save settings for next time</MiniStrong>
          <MiniTipsText>
            You can save the title, description, where to post<br />
            your live video and streaming preferences in the<br />
            saved settings tab.
          </MiniTipsText>
          <MiniAction>Choose Settings</MiniAction>
          <MiniCut>Camera controls</MiniCut>
          <MiniCheck>
            Check that your camera and microphone inputs are properly<br />
            working before going live.
          </MiniCheck>
        </MiniCenter>
        <MiniNext>
          <svg width="21" height="37" viewBox="0 0 21 37" fill="none" stroke="#77797c" strokeWidth="3">
            <path d="m2 1 17 17.500L2 36" />
          </svg>
        </MiniNext>
        <MiniDetails>
          <MiniPost>My weekly radio show - this week it's abo</MiniPost>
          <MiniPost>
            My weekly radio show - this week it's abo<br />
            MANTRA!
          </MiniPost>
          <MiniPin>
            <svg width="36" height="48" viewBox="0 0 36 48">
              <path d="M18 1C8 1 1 8 1 18c0 12 17 29 17 29s17-17 17-29C35 8 28 1 18 1z" fill="#f0392f" />
              <circle cx="18" cy="18" r="6" fill="#fff" />
            </svg>
          </MiniPin>
          <MiniSmall>Required</MiniSmall>
          <MiniThumb>
            <MiniStrong>Video thumbnail image</MiniStrong>
            <MiniSmall>
              Upload your preferred thumbnail<br />
              16:9 (e.g. 1200 x 675)
            </MiniSmall>
            <MiniUpload />
          </MiniThumb>
        </MiniDetails>
      </MiniBody>
      <MiniVolume>
        <MiniDevice>Speakers (Realtek High D</MiniDevice>
        <MiniVolumeRow>
          <SpeakerGlyph size={46} />
          <VolumeSlider type="range" aria-label="Preview volume" $thick={6} defaultValue={100} />
        </MiniVolumeRow>
      </MiniVolume>
      <MiniTaskbar>
        <MiniStart>
          <svg width="32" height="32" viewBox="0 0 32 32">
            <path d="M1 4 31 1v30L1 28z" fill="#fbf8ef" />
          </svg>
        </MiniStart>
        <MiniSearch>
          <svg width="30" height="32" viewBox="0 0 30 32" fill="none" stroke="currentColor" strokeWidth="3">
            <circle cx="19" cy="11" r="9" />
            <path d="M13 18 1 31" />
          </svg>
          Type here to search
        </MiniSearch>
        <AppStrip>
          <AppRow slot={92} icon={48} tray={60} trayIcon={34} trayGap={0} count={6} />
        </AppStrip>
      </MiniTaskbar>
    </MiniScreen>
  </Preview>
);

const CaretGlyph = () => (
  <svg width="32" height="20" viewBox="0 0 32 20">
    <path d="M3 0h26c3 0 4 3 2 5L18 19c-1 1-3 1-4 0L1 5C-1 3 0 0 3 0z" />
  </svg>
);

export default function App() {
  return (
    <Screen>
      <GlobalStyle />
      <TabStrip>
        <TabStub>
          <IconButton aria-label="Close tab"><CrossGlyph /></IconButton>
        </TabStub>
        <Tab>
          <svg width="52" height="54" viewBox="0 0 52 54">
            <rect width="52" height="54" fill="#07080b" />
            <g fill="#fff">
              <path d="M10 36h32l-2 8H12z" />
              <circle cx="7" cy="23" r="3" />
              <circle cx="13" cy="16" r="3" />
              <circle cx="26" cy="11" r="3" />
              <circle cx="39" cy="16" r="3" />
              <circle cx="45" cy="23" r="3" />
            </g>
            <path d="M11 36C4 26 10 17 16 21c3 3 2 9 1 13M41 36c7-10 1-19-5-15-3 3-2 9-1 13M26 11v24M19 30c2-6 5-8 7-14 2 6 5 8 7 14" fill="none" stroke="#fff" strokeWidth="3" />
          </svg>
          <TabTitle $fade>Self Assessment: general enquirie</TabTitle>
          <IconButton aria-label="Close tab"><CrossGlyph /></IconButton>
        </Tab>
        <Tab>
          <svg width="52" height="54" viewBox="0 0 52 54">
            <path d="M26 0 49 12v28L26 54 3 40V12z" fill="#7fdcdc" />
            <path d="M26 0 40 7l-14 12L12 7z" fill="#1ba6a8" />
            <path d="M3 14l12-4 8 14-9 12L3 32z" fill="#43c3c6" />
            <path d="m49 14-12-4-8 14 9 12 11-4z" fill="#5fd0d2" />
            <path d="m26 22 11 15-6 16H21l-6-16z" fill="#c9fbf8" />
            <path d="m3 32 11 6 5 13M49 32l-11 6-5 13M26 22v-5M14 37l12-15 12 15" fill="none" stroke="#e4fffd" strokeWidth="2" />
          </svg>
          <TabTitle $fade>Unity Online Radio - Astrology w</TabTitle>
          <IconButton aria-label="Close tab"><CrossGlyph /></IconButton>
        </Tab>
        <Tab $active>
          <FacebookGlyph size={52} />
          <TabTitle>(3) Facebook</TabTitle>
          <RecordDot />
          <IconButton aria-label="Close tab"><CrossGlyph /></IconButton>
        </Tab>
        <NewTab aria-label="New tab">
          <svg width="40" height="40" viewBox="0 0 40 40" stroke="currentColor" strokeWidth="5">
            <path d="M20 0v40M0 20h40" />
          </svg>
        </NewTab>
      </TabStrip>

      <AddressBar>
        <UrlInput
          aria-label="Address"
          defaultValue="/live/producer/v2/4897501340344318/stream_setup/?entry_point=feedx_sprouts"
        />
        <IconButton type="button" aria-label="Camera access">
          <svg width="42" height="28" viewBox="0 0 42 28" fill="currentColor">
            <rect y="1" width="32" height="26" rx="2" />
            <path d="m30 12 11-10v24L30 16z" />
          </svg>
        </IconButton>
        <IconButton type="button" aria-label="Share">
          <svg width="48" height="46" viewBox="0 0 48 46" fill="none" stroke="currentColor" strokeWidth="3">
            <path d="M10 12H2v32h37V32" />
            <path d="M31 2v9C17 12 12 22 11 34c6-8 12-10 20-10v9l15-16z" />
          </svg>
        </IconButton>
        <StarButton type="button" aria-label="Bookmark this page">
          <svg width="48" height="46" viewBox="0 0 48 46" fill="none" stroke="currentColor" strokeWidth="4">
            <path d="m24 3 6 14 16 1-12 11 4 15-14-8-14 8 4-15L2 18l16-1z" />
          </svg>
        </StarButton>
      </AddressBar>

      <Bookmarks aria-label="Bookmarks">
        {bookmarks.map((b, i) => (
          <Bookmark key={b.name} href="#" $cut={i === 0}>
            <Fav>{b.icon}</Fav>
            {b.name}
          </Bookmark>
        ))}
        <BookmarkTail>
          <IconButton aria-label="More bookmarks">
            <svg width="24" height="20" viewBox="0 0 24 20" fill="none" stroke="currentColor" strokeWidth="5">
              <path d="m2 1 8 9-8 9M13 1l8 9-8 9" />
            </svg>
          </IconButton>
          <TailRule />
          <Fav>
            <rect x="1" y="6" width="50" height="42" rx="2" fill="#fdeb94" stroke="#ecc94f" strokeWidth="3" />
          </Fav>
        </BookmarkTail>
      </Bookmarks>

      <SiteNav aria-label="Facebook">
        {navIcons.map((art, i) => (
          <NavItem key={i} href="#">
            <svg width="92" height="92" viewBox="0 0 92 92" fill="none" stroke="currentColor" strokeWidth="4" strokeLinejoin="round">
              {art}
            </svg>
            {i === 1 && <Badge>9+</Badge>}
          </NavItem>
        ))}
      </SiteNav>

      <Body>
        <Sidebar>
          <SidebarTools>
            <IconButton aria-label="Help">
              <svg width="38" height="58" viewBox="0 0 38 58" fill="none" stroke="currentColor" strokeWidth="6" strokeLinecap="round">
                <path d="M4 17C4 7 10 3 19 3s15 5 15 13c0 11-15 11-15 23" />
                <circle cx="19" cy="52" r="2" fill="currentColor" />
              </svg>
            </IconButton>
            <IconButton aria-label="Collapse sidebar">
              <svg width="64" height="66" viewBox="0 0 64 66">
                <rect x="3" y="3" width="58" height="60" rx="10" fill="#fefefe" stroke="currentColor" strokeWidth="6" />
                <path d="M3 10c0-4 3-7 7-7h18v60H10c-4 0-7-3-7-7z" fill="currentColor" />
                <path d="M9 14h11M9 24h11M9 34h11" stroke="#fefefe" strokeWidth="5" />
                <path d="M48 23v20L38 33z" fill="currentColor" />
              </svg>
            </IconButton>
          </SidebarTools>
          <StepCount>2/3</StepCount>
          <SidebarRule />
          <SelectBox>
            <Select aria-label="Destination"><option /></Select>
            <CaretGlyph />
          </SelectBox>
          <SelectBox>
            <Select aria-label="Schedule"><option /></Select>
            <CaretGlyph />
          </SelectBox>
          <ActiveStep />
          <SidebarFooter>
            <CancelButton>Cancel</CancelButton>
          </SidebarFooter>
        </Sidebar>

        <Main>
          <PreviewCard>
            <SharedScreen />
            <EventLogs>
              <RoundIcon $size={104} $tone="#f5f6fa">
                <svg width="68" height="82" viewBox="0 0 68 82" fill="none" stroke="currentColor" strokeWidth="5" strokeLinecap="round">
                  <rect x="3" y="3" width="62" height="76" rx="9" />
                  <path d="m20 29 10 9 20-23M28 53h24M28 65h16" />
                  <path d="M16 53h1M16 65h1" strokeWidth="6" />
                </svg>
              </RoundIcon>
              Event logs
            </EventLogs>
          </PreviewCard>

          <Columns>
            <LeftColumn>
              <SourceCard>
                <Heading>
                  Select a video source
                  <RoundIcon $size={64} $tone="#90939b">
                    <svg width="28" height="38" viewBox="0 0 28 38" fill="none" stroke="#fff" strokeWidth="7">
                      <path d="M4 12c0-6 4-8 10-8s10 3 10 8c0 7-10 6-10 14" />
                      <path d="M14 31v7" />
                    </svg>
                  </RoundIcon>
                </Heading>
                <SourceOptions>
                  <SourceOption>
                    <input type="radio" name="source" defaultChecked />
                    <SourceTile>
                      <RoundIcon $size={158} $tone="#1478ff">
                        <svg width="80" height="74" viewBox="0 0 80 74">
                          <path d="M12 10h9l5-8c1-1 2-2 4-2h20c2 0 3 1 4 2l5 8h9c7 0 12 5 12 12v38c0 8-5 13-12 13H12C5 73 0 68 0 60V22c0-7 5-12 12-12z" fill="#fff" />
                          <circle cx="40" cy="40" r="19" fill="none" stroke="#1478ff" strokeWidth="5" />
                          <circle cx="67" cy="21" r="4" fill="#1478ff" />
                        </svg>
                      </RoundIcon>
                    </SourceTile>
                    Webcam
                  </SourceOption>
                  <SourceOption $muted>
                    <input type="radio" name="source" />
                    <SourceTile $muted>
                      <RoundIcon $size={152} $tone="#f5f6fb">
                        <svg width="76" height="76" viewBox="0 0 76 76">
                          <path d="M32 34 59 4c4-4 14-1 15 4 1 7-2 9-8 11l-5 9-8 3-5 11c5 17-4 31-21 32C11 75 2 66 2 54c0-14 13-24 30-20z" fill="#c9cbd2" />
                          <circle cx="20" cy="54" r="9" fill="#f5f6fb" />
                        </svg>
                      </RoundIcon>
                    </SourceTile>
                    Streaming software
                  </SourceOption>
                </SourceOptions>
                <CardRule />
                <DeviceRow>
                  <IconButton aria-label="Next">
                    <svg width="34" height="64" viewBox="0 0 34 64" fill="none" stroke="#5e6063" strokeWidth="4">
                      <path d="m2 2 29 30L2 62" />
                    </svg>
                  </IconButton>
                </DeviceRow>
              </SourceCard>

              <CameraCard>
                <Heading>Camera controls</Heading>
                <CameraText>
                  Check that your camera and microphone inputs are properly<br />
                  working before going live.
                </CameraText>
              </CameraCard>

              <TipsPopup>
                <TipsHead>
                  <FacebookGlyph size={64} />
                  Tips
                  <TipsClose aria-label="Close tips"><CrossGlyph size={32} /></TipsClose>
                </TipsHead>
                <TipsTitle>Save settings for next time</TipsTitle>
                <TipsText>
                  You can save the title, description, where to post<br />
                  your live video and streaming preferences in the<br />
                  saved settings tab.
                </TipsText>
                <TipsAction>Choose Settings</TipsAction>
              </TipsPopup>
            </LeftColumn>

            <DetailsCard>
              <Inset>
                <Heading>Add post details</Heading>
                <ShareHeading as="h3">Share to story</ShareHeading>
                <ShareText>Your live video will also be added to you</ShareText>
              </Inset>
              <Field>
                Title (required)
                <TitleInput defaultValue="My weekly radio show - this week it's about" />
              </Field>
              <Description aria-label="Description" defaultValue={"My weekly radio show - this week it's about\nMANTRA!"} />
              <Required>Required</Required>
              <Inset>
                <ThumbTitle>Video thumbnail image</ThumbTitle>
                <ThumbText>
                  Upload your preferred thumbnail<br />
                  16:9 (e.g. 1200 x 675)
                </ThumbText>
                <UploadButton aria-label="Upload image" />
              </Inset>
            </DetailsCard>
          </Columns>
        </Main>

        <VolumeFlyout>
          <VolumeDevice>Speakers (Realtek</VolumeDevice>
          <VolumeRow>
            <SpeakerGlyph />
            <VolumeSlider type="range" aria-label="Volume" $thick={9} defaultValue={100} />
          </VolumeRow>
        </VolumeFlyout>
      </Body>

      <Taskbar>
        <SearchArea />
        <AppStrip>
          <AppRow slot={162} icon={80} tray={105} trayIcon={56} trayGap={12} count={5} />
        </AppStrip>
      </Taskbar>
    </Screen>
  );
}
